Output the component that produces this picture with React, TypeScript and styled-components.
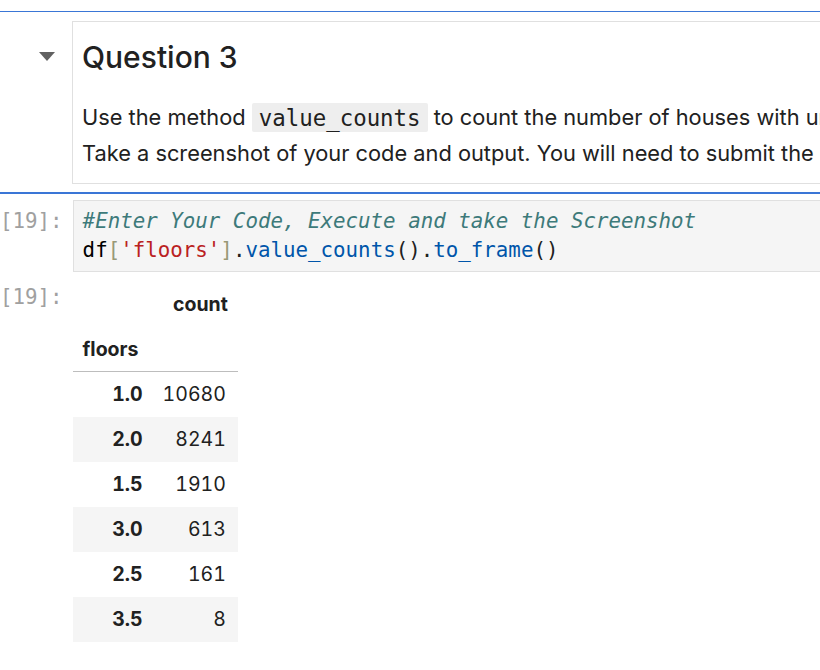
import React from "react";
import styled, { createGlobalStyle } from "styled-components";

const Global = createGlobalStyle`
  html, body { margin: 0; padding: 0; background: #ffffff; overflow: hidden; }
  body { font-family: Inter, "Liberation Sans", sans-serif; color: #212121; }
`;

const Notebook = styled.div`
  width: 820px;
  height: 670px;
  overflow: hidden;
  padding-top: 11px;
  box-sizing: border-box;
`;

const Rule = styled.div<{ $thick?: boolean }>`
  height: ${(p) => (p.$thick ? 2 : 1)}px;
  background: #3a76d6;
`;

const Cell = styled.div<{ $top: number }>`
  display: flex;
  align-items: flex-start;
  margin-top: ${(p) => p.$top}px;
`;

const Prompt = styled.div<{ $pad: number }>`
  flex: 0 0 72px;
  box-sizing: border-box;
  padding: ${(p) => p.$pad}px 10px 0 0;
  text-align: right;
  font-family: "DejaVu Sans Mono", monospace;
  font-size: 20.8px;
  line-height: 29px;
  color: #a0a0a0;
  white-space: nowrap;
`;

const Collapser = styled.div`
  flex: 0 0 72px;
  display: flex;
  justify-content: flex-end;
  box-sizing: border-box;
  padding: 31px 17px 0 0;
`;

const MdBox = styled.div`
  flex: 1;
  border: 1px solid #e0e0e0;
  margin-right: -400px;
  padding: 17px 9px 11px;
  white-space: nowrap;
`;

const Heading = styled.h2`
  margin: 0;
  font-size: 30px;
  font-weight: 500;
  line-height: 36px;
  color: #212121;
`;

const Para = styled.p`
  margin: 25px 0 0;
  font-size: 21.8px;
  line-height: 35.84px;
  color: #212121;
`;

const InlineCode = styled.code`
  font-family: "DejaVu Sans Mono", monospace;
  font-size: 22.4px;
  background: #eeeeee;
  padding: 1.5px 7px;
  border-radius: 2px;
`;

const CodeBox = styled.pre`
  flex: 1;
  margin: 0 -400px 0 0;
  background: #f5f5f5;
  border: 1px solid #e0e0e0;
  padding: 6px 9px;
  font-family: "DejaVu Sans Mono", monospace;
  font-size: 20.8px;
  line-height: 29px;
  color: #000000;
`;

const Tok = styled.span<{ $c: string; $i?: boolean }>`
  color: ${(p) => p.$c};
  font-style: ${(p) => (p.$i ? "italic" : "normal")};
`;

const Table = styled.table`
  border-collapse: collapse;
  font-size: 19.5px;
  font-variant-numeric: tabular-nums;
  color: #212121;
`;

const Head = styled.thead`
  border-bottom: 1px solid #bdbdbd;
`;

const Row = styled.tr`
  height: 45px;
  tbody &:nth-child(even) {
    background: #f5f5f5;
  }
`;

const Th = styled.th<{ $w?: number; $left?: boolean }>`
  padding: 0 10px;
  text-align: ${(p) => (p.$left ? "left" : "right")};
  font-weight: 700;
  min-width: ${(p) => p.$w ?? 0}px;
`;

const Td = styled.td`
  padding: 0 12px 0 10px;
  text-align: right;
`;

const rows: [string, string][] = [
  ["1.0", "10680"],
  ["2.0", "8241"],
  ["1.5", "1910"],
  ["3.0", "613"],
  ["2.5", "161"],
  ["3.5", "8"],
];

export default function App() {
  return (
    <>
      <Global />
      <Notebook>
        <Rule />
        <Cell $top={9}>
          <Collapser>
            <svg width="16" height="9" viewBox="0 0 16 9">
              <polygon points="0,0 16,0 8,9" fill="#616161" />
            </svg>
          </Collapser>
          <MdBox>
            <Heading>Question 3</Heading>
            <Para>
              Use the method <InlineCode>value_counts</InlineCode> to count the number of houses with unique floor values, use the method <InlineCode>.to_frame()</InlineCode> to convert it to a data frame.
              <br />
              Take a screenshot of your code and output. You will need to submit the screenshot for the final project.
            </Para>
          </MdBox>
        </Cell>
        <Cell $top={8}>
          <div style={{ flex: 1 }}>
            <Rule $thick />
          </div>
        </Cell>
        <Cell $top={6}>
          <Prompt $pad={7}>[19]:</Prompt>
          <CodeBox>
            <Tok $c="#3d7a7a" $i>#Enter Your Code, Execute and take the Screenshot</Tok>
            {"\n"}
            <Tok $c="#000000">df</Tok>
            <Tok $c="#999977">[</Tok>
            <Tok $c="#ba2121">'floors'</Tok>
            <Tok $c="#999977">]</Tok>
            <Tok $c="#212121">.</Tok>
            <Tok $c="#0055aa">value_counts</Tok>
            <Tok $c="#212121">().</Tok>
            <Tok $c="#0055aa">to_frame</Tok>
            <Tok $c="#212121">()</Tok>
          </CodeBox>
        </Cell>
        <Cell $top={10}>
          <Prompt $pad={1}>[19]:</Prompt>
          <Table>
            <Head>
              <Row>
                <Th $w={60} />
                <Th $w={60}>count</Th>
              </Row>
              <Row>
                <Th $left>floors</Th>
                <Th />
              </Row>
            </Head>
            <tbody>
              {rows.map(([k, v]) => (
                <Row key={k}>
                  <Th>{k}</Th>
                  <Td>{v}</Td>
                </Row>
              ))}
            </tbody>
          </Table>
        </Cell>
      </Notebook>
    </>
  );
}
